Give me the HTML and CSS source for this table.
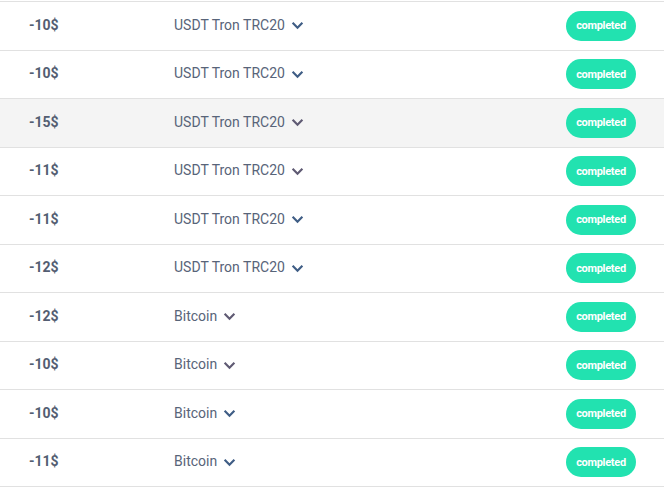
FILE: index.html
```html
<!DOCTYPE html>
<html>
<head>
<meta charset="utf-8">
<link rel="stylesheet" href="styles.css">
</head>
<body>
<div class="table">
  <div class="row"><div class="amount">-10$</div><div class="coin">USDT Tron TRC20<svg class="chev" viewBox="0 0 12 8"><path d="M1.5 1.5 L6 6 L10.5 1.5"/></svg></div><div class="status"><span class="badge">completed</span></div></div>
  <div class="row"><div class="amount">-10$</div><div class="coin">USDT Tron TRC20<svg class="chev" viewBox="0 0 12 8"><path d="M1.5 1.5 L6 6 L10.5 1.5"/></svg></div><div class="status"><span class="badge">completed</span></div></div>
  <div class="row hover"><div class="amount">-15$</div><div class="coin">USDT Tron TRC20<svg class="chev" viewBox="0 0 12 8"><path d="M1.5 1.5 L6 6 L10.5 1.5"/></svg></div><div class="status"><span class="badge">completed</span></div></div>
  <div class="row"><div class="amount">-11$</div><div class="coin">USDT Tron TRC20<svg class="chev alt" viewBox="0 0 12 8"><path d="M1.5 1.5 L6 6 L10.5 1.5"/></svg></div><div class="status"><span class="badge">completed</span></div></div>
  <div class="row"><div class="amount">-11$</div><div class="coin">USDT Tron TRC20<svg class="chev" viewBox="0 0 12 8"><path d="M1.5 1.5 L6 6 L10.5 1.5"/></svg></div><div class="status"><span class="badge">completed</span></div></div>
  <div class="row"><div class="amount">-12$</div><div class="coin">USDT Tron TRC20<svg class="chev" viewBox="0 0 12 8"><path d="M1.5 1.5 L6 6 L10.5 1.5"/></svg></div><div class="status"><span class="badge">completed</span></div></div>
  <div class="row"><div class="amount">-12$</div><div class="coin">Bitcoin<svg class="chev alt" viewBox="0 0 12 8"><path d="M1.5 1.5 L6 6 L10.5 1.5"/></svg></div><div class="status"><span class="badge">completed</span></div></div>
  <div class="row"><div class="amount">-10$</div><div class="coin">Bitcoin<svg class="chev alt" viewBox="0 0 12 8"><path d="M1.5 1.5 L6 6 L10.5 1.5"/></svg></div><div class="status"><span class="badge">completed</span></div></div>
  <div class="row"><div class="amount">-10$</div><div class="coin">Bitcoin<svg class="chev" viewBox="0 0 12 8"><path d="M1.5 1.5 L6 6 L10.5 1.5"/></svg></div><div class="status"><span class="badge">completed</span></div></div>
  <div class="row"><div class="amount">-11$</div><div class="coin">Bitcoin<svg class="chev" viewBox="0 0 12 8"><path d="M1.5 1.5 L6 6 L10.5 1.5"/></svg></div><div class="status"><span class="badge">completed</span></div></div>
</div>
</body>
</html>
```
FILE: styles.css
```css
html, body {
  margin: 0;
  padding: 0;
  background: #ffffff;
}
body {
  font-family: Roboto, "Liberation Sans", sans-serif;
  padding-top: 1px;
}
.table {
  border-top: 1px solid #e1e1e1;
  width: 664px;
}
.row {
  box-sizing: border-box;
  height: 48.5px;
  border-bottom: 1px solid #e1e1e1;
  display: flex;
  align-items: center;
  padding: 0 28px 0 29px;
}
.row.hover {
  background: #f4f4f4;
}
.amount {
  width: 145px;
  margin-bottom: 2px;
  font-size: 14px;
  font-weight: 700;
  color: #535e72;
}
.coin {
  flex: 1;
  display: flex;
  align-items: center;
  margin-bottom: 2px;
  font-size: 14px;
  color: #586479;
}
.chev {
  width: 13px;
  height: 9px;
  margin-left: 6px;
  margin-top: 2px;
  fill: none;
  stroke: #3f5d85;
  stroke-width: 2;
}
.chev.alt,
.hover .chev {
  stroke: #5f5a73;
}
.badge {
  display: inline-flex;
  align-items: center;
  justify-content: center;
  width: 70px;
  height: 30px;
  border-radius: 15px;
  background: #22e2b0;
  color: #ffffff;
  font-size: 11px;
  font-weight: 700;
  letter-spacing: -0.3px;
}
```
